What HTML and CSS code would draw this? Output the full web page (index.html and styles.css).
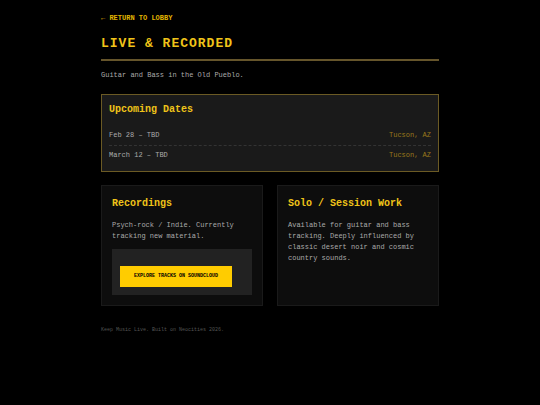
FILE: index.html
```html
<!DOCTYPE html>
<html lang="en">
<head>
  <meta charset="UTF-8">
  <meta name="viewport" content="width=device-width, initial-scale=1.0">
  <title>Live &amp; Recorded</title>
  <link rel="stylesheet" href="styles.css">
</head>
<body>
  <div class="container">
    <a href="index.html" class="back-link">← RETURN TO LOBBY</a>

    <header>
      <h1>LIVE &amp; RECORDED</h1>
      <p class="tagline">Guitar and Bass in the Old Pueblo.</p>
    </header>

    <section class="dates">
      <h2>Upcoming Dates</h2>
      <ul class="date-list">
        <li><span>Feb 28 – TBD</span><span class="place">Tucson, AZ</span></li>
        <li><span>March 12 – TBD</span><span class="place">Tucson, AZ</span></li>
      </ul>
    </section>

    <div class="grid">
      <section class="card">
        <h2>Recordings</h2>
        <p>Psych-rock / Indie. Currently tracking new material.</p>
        <div class="player">
          <a href="#" class="btn">EXPLORE TRACKS ON SOUNDCLOUD</a>
        </div>
      </section>

      <section class="card">
        <h2>Solo / Session Work</h2>
        <p>Available for guitar and bass tracking. Deeply influenced by classic desert noir and cosmic country sounds.</p>
      </section>
    </div>

    <footer>Keep Music Live. Built on Neocities 2026.</footer>
  </div>
</body>
</html>
```

FILE: styles.css
```css
* {
  box-sizing: border-box;
}

body {
  margin: 0;
  padding: 13px 16px;
  background: #000;
  color: #aaa;
  font-family: 'Courier New', Courier, 'Liberation Mono', monospace;
  font-size: 7px;
  line-height: 11px;
}

.container {
  max-width: 338px;
  margin: 0 auto;
}

h1, h2, p, ul {
  margin: 0;
}

.back-link {
  display: inline-block;
  color: #e0b400;
  font-weight: bold;
  text-decoration: none;
}

h1 {
  margin-top: 9px;
  padding-bottom: 4px;
  border-bottom: 2px solid #66552b;
  color: #f0c419;
  font-size: 13px;
  line-height: 22px;
  letter-spacing: 1px;
}

h2 {
  margin-bottom: 8px;
  color: #f0c419;
  font-size: 10px;
  line-height: 16px;
}

.tagline {
  margin-top: 9px;
}

/* Upcoming dates */
.dates {
  margin-top: 13px;
  padding: 7px 7px 6px;
  background: #1a1a1a;
  border: 1px solid #6b5a24;
}

.date-list {
  padding: 0;
  list-style: none;
}

.date-list li {
  display: flex;
  justify-content: space-between;
  padding: 4px 0;
}

.date-list li + li {
  border-top: 1px dashed #333;
}

.place {
  color: #99781a;
}

/* Cards */
.grid {
  display: grid;
  grid-template-columns: 1fr 1fr;
  gap: 14px;
  margin-top: 13px;
}

.card {
  padding: 10px;
  background: #0d0d0d;
  border: 1px solid #1a1a1a;
}

.player {
  margin-top: 7px;
  padding: 17px 8px 8px;
  background: #222;
}

.btn {
  display: block;
  width: fit-content;
  padding: 5px 14px;
  background: #fc0;
  color: #000;
  font-size: 5px;
  font-weight: bold;
  text-decoration: none;
}

footer {
  margin-top: 19px;
  color: #555;
  font-size: 5px;
}
```
